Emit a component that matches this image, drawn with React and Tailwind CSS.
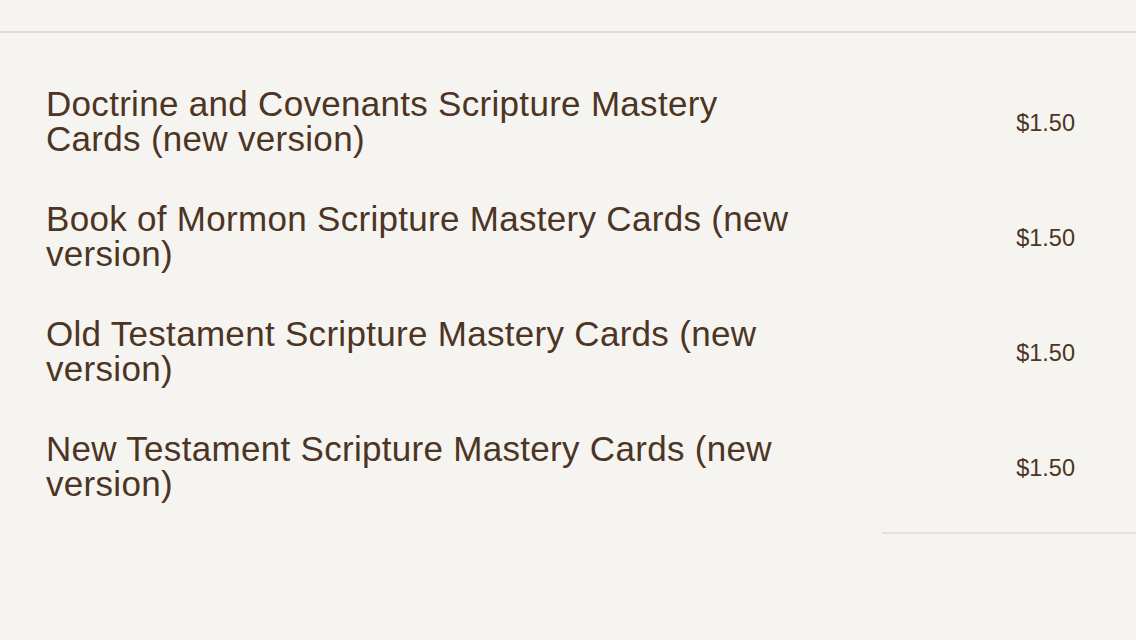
import React from 'react';

const items = [
  { title: 'Doctrine and Covenants Scripture Mastery Cards (new version)', price: '$1.50' },
  { title: 'Book of Mormon Scripture Mastery Cards (new version)', price: '$1.50' },
  { title: 'Old Testament Scripture Mastery Cards (new version)', price: '$1.50' },
  { title: 'New Testament Scripture Mastery Cards (new version)', price: '$1.50' },
];

export default function App() {
  return (
    <div className="w-[1136px] h-[640px] bg-[#f6f4f0] text-[#4c3524] overflow-hidden" style={{ fontFamily: '"Liberation Sans", Arial, sans-serif' }}>
      <div className="h-[31px]" />
      <div className="h-[2px] bg-[#dfdcd7]" />
      <div className="pt-[30px]">
        {items.map((it) => (
          <div key={it.title} className="flex items-center h-[115px] pl-[46px] pr-[61px]">
            <div className="w-[760px] text-[35px] leading-[35px] tracking-[0.3px]">{it.title}</div>
            <div className="ml-auto mt-[5px] text-[23.5px] leading-[24px]">{it.price}</div>
          </div>
        ))}
      </div>
      <div className="ml-[882px] mt-[9px] h-[2px] bg-[#e4e1dc]" />
    </div>
  );
}
